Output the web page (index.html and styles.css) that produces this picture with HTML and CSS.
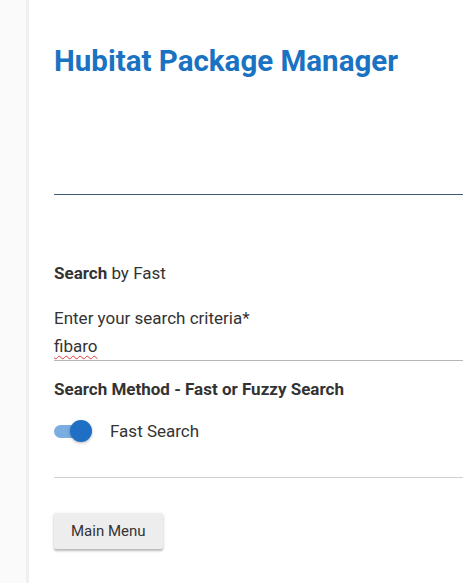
FILE: index.html
```html
<!DOCTYPE html>
<html>
<head>
<meta charset="utf-8">
<link rel="stylesheet" href="styles.css">
</head>
<body>
<div class="page">
  <aside class="side"></aside>
  <main class="main">
    <h1 class="title">Hubitat Package Manager</h1>
    <div class="rule-blue"></div>
    <p class="search-by"><b>Search</b> by Fast</p>
    <div class="field">
      <label class="field-label">Enter your search criteria*</label>
      <div class="field-input"><span class="spell">fibaro</span></div>
    </div>
    <p class="section">Search Method - Fast or Fuzzy Search</p>
    <div class="toggle-row">
      <span class="switch"><span class="track"></span><span class="thumb"></span></span>
      <span class="toggle-label">Fast Search</span>
    </div>
    <div class="rule-gray"></div>
    <button class="btn">Main Menu</button>
  </main>
</div>
</body>
</html>
```
FILE: styles.css
```css
html, body {
  margin: 0;
  padding: 0;
  background: #fff;
}
body {
  font-family: Roboto, "Noto Sans", sans-serif;
  color: #333;
}
.page {
  display: flex;
  min-height: 583px;
}
.side {
  width: 26px;
  flex: none;
  background: #fafafa;
  border-right: 3px solid #efefef;
}
.main {
  flex: 1;
  padding-left: 25px;
  padding-top: 41px;
  overflow: hidden;
}
.title {
  margin: 0;
  font-size: 29.5px;
  line-height: 40px;
  font-weight: 700;
  color: #1a72c2;
  letter-spacing: 0;
}
.rule-blue {
  height: 1px;
  background: #3f5a74;
  margin-top: 113px;
}
.search-by {
  margin: 68px 0 0;
  font-size: 17px;
  line-height: 20px;
  color: #333;
}
.search-by b {
  font-weight: 700;
}
.field {
  margin-top: 25px;
}
.field-label {
  display: block;
  font-size: 17px;
  line-height: 20px;
  color: #333;
}
.field-input {
  font-size: 17px;
  line-height: 20px;
  padding: 8px 0 4px;
  border-bottom: 1px solid #b5b5b5;
  color: #333;
}
.spell {
  text-decoration: underline wavy #e53935;
  text-decoration-thickness: 1px;
  text-underline-offset: 3px;
}
.section {
  margin: 18px 0 0;
  font-size: 17px;
  line-height: 20px;
  font-weight: 700;
  color: #333;
}
.toggle-row {
  display: flex;
  align-items: center;
  margin-top: 20px;
  height: 24px;
}
.switch {
  position: relative;
  width: 38px;
  height: 24px;
  flex: none;
}
.track {
  position: absolute;
  left: 0;
  top: 6px;
  width: 34px;
  height: 13px;
  border-radius: 7px;
  background: #7aaee0;
}
.thumb {
  position: absolute;
  left: 16px;
  top: 1px;
  width: 22px;
  height: 22px;
  border-radius: 50%;
  background: #1f6fc5;
  box-shadow: 0 1px 3px rgba(0,0,0,0.3);
}
.toggle-label {
  margin-left: 18px;
  font-size: 17px;
  color: #333;
}
.rule-gray {
  height: 1px;
  background: #d0d0d0;
  margin-top: 34px;
}
.btn {
  margin-top: 35px;
  height: 36px;
  padding: 0 17px;
  border: none;
  border-radius: 2px;
  background: #ededed;
  font-family: Roboto, sans-serif;
  font-size: 15px;
  font-weight: 400;
  color: #333;
  box-shadow: 0 2px 2px rgba(0,0,0,0.22), 0 1px 4px rgba(0,0,0,0.1);
}
```
